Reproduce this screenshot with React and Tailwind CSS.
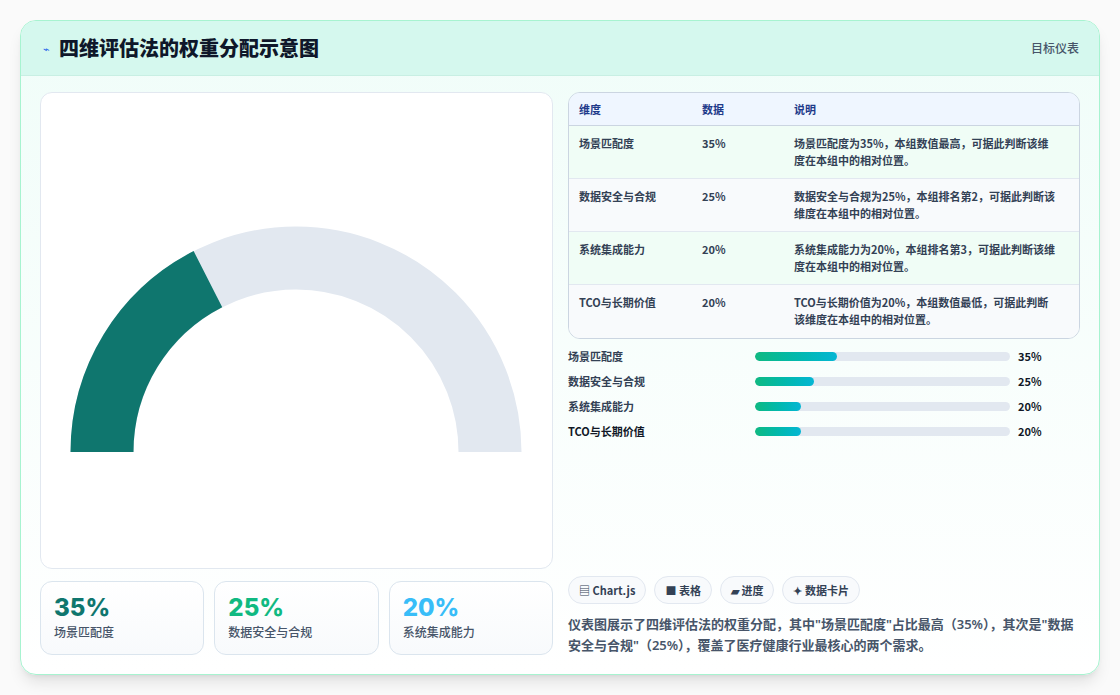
import React from "react";

const rows = [
  ["场景匹配度", "35%", "场景匹配度为35%，本组数值最高，可据此判断该维度在本组中的相对位置。", "bg-[#f0fdf6]"],
  ["数据安全与合规", "25%", "数据安全与合规为25%，本组排名第2，可据此判断该维度在本组中的相对位置。", "bg-[#f8fafc]"],
  ["系统集成能力", "20%", "系统集成能力为20%，本组排名第3，可据此判断该维度在本组中的相对位置。", "bg-[#f0fdf6]"],
  ["TCO与长期价值", "20%", "TCO与长期价值为20%，本组数值最低，可据此判断该维度在本组中的相对位置。", "bg-[#f8fafc]"],
];
const bars = [["场景匹配度", 32, "35%"], ["数据安全与合规", 23, "25%"], ["系统集成能力", 18, "20%"], ["TCO与长期价值", 18, "20%"]];

export default function App() {
  const font = { fontFamily: '"Noto Sans CJK SC", "Noto Sans", sans-serif' };
  const r = 194;
  const a = Math.PI * (1 - 0.35);
  return (
    <div className="w-[1120px] h-[695px] bg-[#fafafa] p-5" style={font}>
      <div className="h-[655px] rounded-2xl border border-[#a7f3d0] bg-gradient-to-b from-[#f0fdf9] to-white overflow-hidden flex flex-col shadow-lg">
        <div className="h-[55px] bg-[#d5f8ee] border-b border-[#c8efe3] flex items-center pl-[22px] pr-5 justify-between">
          <div className="flex items-center gap-[9px]">
            <span className="text-[#2563eb] text-[11px]">⌁</span>
            <span className="text-[20px] font-black text-[#0f172a]">四维评估法的权重分配示意图</span>
          </div>
          <span className="text-xs font-medium text-[#475569]">目标仪表</span>
        </div>
        <div className="flex gap-[15px] px-[19px] pt-4 flex-1">
          <div className="w-[513px] flex flex-col gap-3">
            <div className="h-[477px] bg-white rounded-xl border border-[#e2e8f0] relative">
              <svg width="513" height="477" className="absolute left-0 top-0">
                <path d={`M 61 359 A ${r} ${r} 0 0 1 449 359`} stroke="#e2e8f0" strokeWidth="63" fill="none" />
                <path d={`M 61 359 A ${r} ${r} 0 0 1 ${255 + r * Math.cos(a)} ${359 - r * Math.sin(a)}`} stroke="#0f766e" strokeWidth="63" fill="none" />
              </svg>
            </div>
            <div className="flex gap-[10px]">
              {[["35%", "场景匹配度", "text-[#0f766e]"], ["25%", "数据安全与合规", "text-[#10b981]"], ["20%", "系统集成能力", "text-[#38bdf8]"]].map(([v, l, c]) => (
                <div key={l} className="flex-1 h-[74px] rounded-xl border border-[#dbe5ee] bg-gradient-to-b from-white to-[#f8fafc] px-[13px] pt-[10px]">
                  <div className={`text-[24px] font-extrabold leading-8 ${c}`} style={{ fontFamily: 'Inter, "Noto Sans", sans-serif' }}>{v}</div>
                  <div className="text-xs font-medium text-[#475569]">{l}</div>
                </div>
              ))}
            </div>
          </div>
          <div className="flex-1 flex flex-col">
            <div className="rounded-xl border border-[#cbd5e1] overflow-hidden text-[11px] text-[#334155] font-semibold">
              <div className="flex bg-[#eff6ff] h-[33px] items-center px-[10px] font-bold text-[#1e3a8a] border-b border-[#cbd5e1]">
                <div className="w-[123px]">维度</div><div className="w-[92px]">数据</div><div className="flex-1">说明</div>
              </div>
              {rows.map(([n, v, d, bg], i) => (
                <div key={n} className={`flex px-[10px] pt-[9px] h-[53px] ${bg} ${i < 3 ? "border-b border-[#e2e8f0]" : ""}`}>
                  <div className="w-[123px]">{n}</div><div className="w-[92px]">{v}</div><div className="flex-1 leading-[17px] pr-[12px]">{d}</div>
                </div>
              ))}
            </div>
            <div className="mt-2 flex flex-col gap-[7px] text-[11px] font-semibold text-[#334155]">
              {bars.map(([n, p, v], i) => (
                <div key={n} className="flex items-center h-[18px]">
                  <div className={`w-[187px] ${i === 3 ? "font-bold text-[#111827]" : ""}`}>{n}</div>
                  <div className="w-[255px] h-[9px] rounded-full bg-[#e2e8f0] overflow-hidden">
                    <div className="h-full rounded-full bg-gradient-to-r from-[#10b981] to-[#06b6d4]" style={{ width: `${p}%` }} />
                  </div>
                  <div className="ml-2 font-bold text-[#111827]">{v}</div>
                </div>
              ))}
            </div>
            <div className="flex-1" />
            <div className="flex gap-2 text-[11px] font-bold text-[#334155]">
              {["▤ Chart.js", "■ 表格", "▰ 进度", "✦ 数据卡片"].map((t) => (
                <div key={t} className="h-[28px] px-[10px] flex items-center rounded-full border border-[#e2e8f0] bg-[#f8fafc]">{t}</div>
              ))}
            </div>
            <p className="mt-[10px] mb-[18px] text-[13px] leading-[21px] text-[#475569] font-semibold" style={{ fontFamily: '"Noto Sans", "Noto Sans CJK SC", sans-serif' }}>
              仪表图展示了四维评估法的权重分配，其中"场景匹配度"占比最高（35%），其次是"数据安全与合规"（25%），覆盖了医疗健康行业最核心的两个需求。
            </p>
          </div>
        </div>
      </div>
    </div>
  );
}
